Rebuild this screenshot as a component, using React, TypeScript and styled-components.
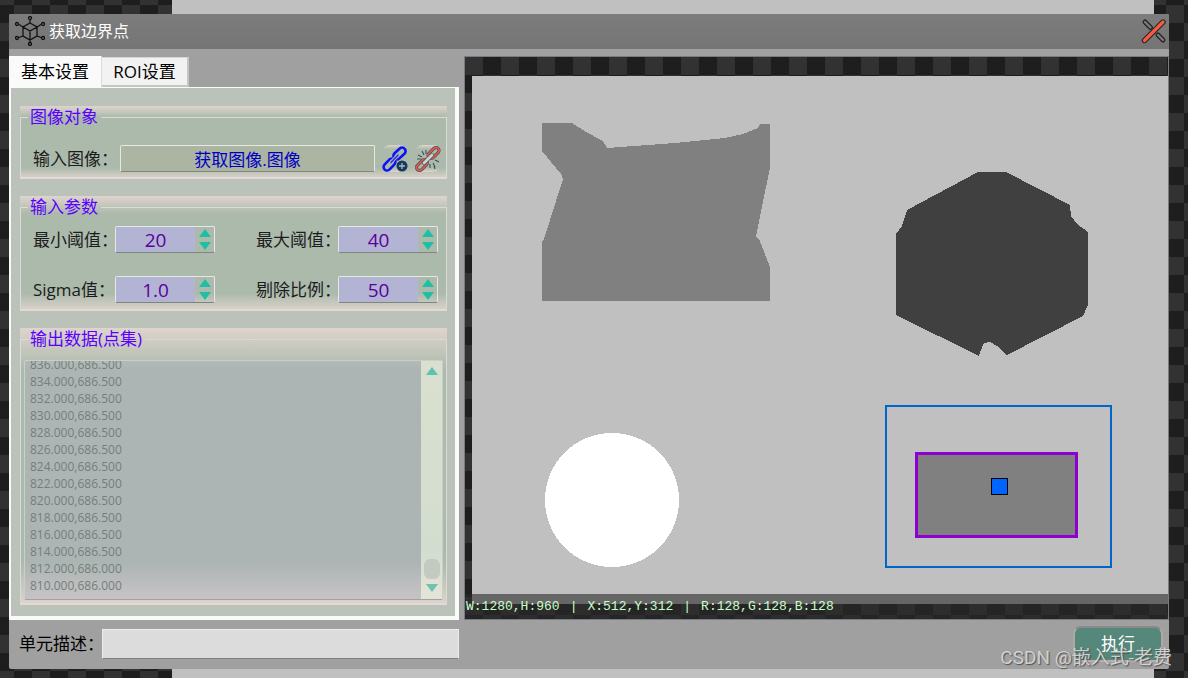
import React, { useLayoutEffect, useRef, useState } from 'react';
import styled, { createGlobalStyle, css } from 'styled-components';

const uiFont = '"Open Sans", "Noto Sans CJK SC", sans-serif';
const fade = 'linear-gradient(#dfd4ce 0%, #acbaac 15%, #acbaac 85%, #dfd4ce 100%)';

const GlobalStyle = createGlobalStyle`
  *, *::before, *::after { box-sizing: border-box; }
  body { margin: 0; font-family: ${uiFont}; font-size: 17px; line-height: 22px; color: #1c1c1c; }
  button, input, textarea { font: inherit; margin: 0; padding: 0; }
`;

const checker = 'repeating-conic-gradient(#1e1e1e 0 25%, #323232 0 50%)';

const Desktop = styled.div`
  min-height: 100vh;
  padding: 14px 19px 9px 9px;
  display: flex;
  background:
    linear-gradient(#c0c0c0, #c0c0c0) 172px 0 / calc(100% - 206px) 100% no-repeat,
    ${checker} 14px 5px / 36px 36px;
`;

const Window = styled.section`
  position: relative;
  flex: 1;
  min-width: 0;
  display: flex;
  flex-direction: column;
  background: #a0a0a0;
  border-radius: 2px;
`;

const TitleBar = styled.header`
  height: 35px;
  padding: 0 2px 2px 6px;
  display: flex;
  align-items: center;
  gap: 4px;
  background: linear-gradient(#7c7c7c, #757575);
  border-radius: 2px 2px 0 0;
`;

const Title = styled.h1`
  flex: 1;
  margin: 0;
  font-size: 16px;
  font-weight: 400;
  color: #fff;
`;

const PlainButton = styled.button`
  border: 0;
  background: none;
  display: flex;
  align-items: center;
  justify-content: center;
`;

const Main = styled.main`
  flex: 1;
  padding-top: 7px;
  display: flex;
  gap: 5px;
`;

const Settings = styled.div`
  flex: 0 0 450px;
  display: flex;
  flex-direction: column;
`;

const TabList = styled.div`
  height: 31px;
  display: flex;
  align-items: flex-end;
`;

const Tab = styled.button<{ $active: boolean }>`
  color: #000;
  ${({ $active }) =>
    $active
      ? css`
          width: 93px;
          height: 31px;
          border: 0;
          border-right: 1px solid #dcdcdc;
          background: #fafafa;
        `
      : css`
          width: 87px;
          height: 30px;
          border: 1px solid #fff;
          border-width: 1px 2px 2px 0;
          border-color: #d4d8d4 #c0c8c0 #c0c8c0;
          background: #f2f2f2;
        `}
`;

const Pane = styled.div`
  flex: 1;
  padding: 18px 8px 11px 9px;
  display: flex;
  flex-direction: column;
  gap: 17px;
  border: solid #fafafa;
  border-width: 1px 4px 4px 2px;
  background: #bac2ba;
`;

const Group = styled.div<{ $grow?: boolean }>`
  flex: ${({ $grow }) => ($grow ? 1 : 'none')};
  display: flex;
  background: ${fade};
`;

const GroupFields = styled.fieldset<{ $pad: string }>`
  flex: 1;
  min-width: 0;
  margin: 0;
  padding: ${({ $pad }) => $pad};
  border: 1px solid #d9dcd5;
  border-bottom: 2px solid #e2dad4;
  display: flex;
  flex-direction: column;
  gap: 23px;
`;

const GroupTitle = styled.legend<{ $list?: boolean }>`
  margin-left: ${({ $list }) => ($list ? '4px' : '-5px')};
  padding: 0 3px 0 2px;
  color: #5a00ff;
`;

const Row = styled.div`
  display: flex;
  align-items: center;
`;

const Label = styled.label<{ $width: number }>`
  flex: none;
  width: ${({ $width }) => $width}px;
  white-space: nowrap;
`;

const bevel = css`
  border: 1px solid #e6e8e4;
  border-bottom-color: #808580;
  border-radius: 2px;
`;

const SourceInput = styled.input`
  flex: 1;
  min-width: 0;
  height: 27px;
  ${bevel}
  background: #abb5a1;
  color: #0000c4;
  text-align: center;
`;

const LinkButton = styled(PlainButton)`
  flex: none;
  width: 26px;
  height: 27px;
  margin-left: 7px;
  border-radius: 8px;
  background: ${fade};
`;

const SpinFrame = styled.div`
  flex: none;
  width: 100px;
  height: 27px;
  display: flex;
  ${bevel}
`;

const SpinInput = styled.input`
  flex: 1;
  min-width: 0;
  border: 0;
  background: #b3b3d4;
  color: #5a009c;
  font-size: 19px;
  text-align: center;
  appearance: textfield;
  &::-webkit-inner-spin-button { appearance: none; margin: 0; }
`;

const SpinButtons = styled.div`
  width: 19px;
  padding: 2px 0;
  display: flex;
  flex-direction: column;
  justify-content: space-between;
`;

const Gap = styled.div`
  flex: 0 0 41px;
`;

const Output = styled.div`
  flex: 1;
  min-height: 0;
  display: flex;
  border: 1px solid #c9cfc9;
  border-bottom-color: #a2a2a0;
  border-radius: 2px;
  background: rgba(174, 176, 192, 0.4);
`;

const OutputText = styled.textarea`
  flex: 1;
  min-width: 0;
  height: 100%;
  min-height: 238px;
  padding: 5px;
  border: 0;
  resize: none;
  background: none;
  color: #747f79;
  font-size: 12px;
  line-height: 17px;
  scrollbar-width: none;
`;

const ScrollTrack = styled.div`
  width: 21px;
  padding: 6px 0 7px;
  display: flex;
  flex-direction: column;
  align-items: center;
  background: linear-gradient(#d9e0cf 0%, #d3ddcf 80%, #e6e4d8 100%);
`;

const ScrollThumb = styled.div`
  width: 16px;
  height: 20px;
  margin: auto 0 5px;
  border-radius: 6px;
  background: #c3cac2;
`;

const Viewer = styled.div`
  position: relative;
  flex: 1;
  min-width: 0;
  padding: 19px 0 15px 7px;
  display: flex;
  border: 1px solid #777b86;
  background: ${checker} 0 0 / 36px 36px;
`;

const Picture = styled.svg`
  flex: 1;
  min-width: 0;
  display: block;
  background: #c0c0c0;
`;

const Status = styled.div`
  position: absolute;
  left: 0;
  right: 0;
  bottom: 0;
  height: 25px;
  padding: 1px 0 0 1px;
  display: flex;
  align-items: center;
  gap: 10px;
  background: rgba(42, 42, 42, 0.6);
  color: #c8ffc8;
  font: 13px/24px "Liberation Mono", monospace;
`;

const Footer = styled.footer`
  height: 49px;
  padding: 0 6px 1px 10px;
  display: flex;
  align-items: center;
  color: #000;
`;

const DescriptionInput = styled.input`
  width: 357px;
  height: 30px;
  padding: 0 6px;
  border: 1px solid #ececec;
  border-bottom-color: #808080;
  background: #dcdcdc;
`;

const RunButton = styled.button`
  width: 90px;
  height: 36px;
  margin-left: auto;
  border: 2px solid #aea8a4;
  border-color: #8a8a88 #aea8a4 #b8b0ac;
  border-radius: 8px;
  background: #56877b;
  color: #fff;
`;

const Watermark = styled.div`
  position: absolute;
  right: -3px;
  bottom: -1px;
  font: 19px/24px Roboto, "Noto Sans CJK SC", sans-serif;
  color: rgba(225, 225, 225, 0.85);
  text-shadow: 1px 1px 1px rgba(60, 60, 60, 0.8);
  white-space: nowrap;
  pointer-events: none;
`;

function Triangle({ down, color = '#1fbfa6' }: { down?: boolean; color?: string }) {
  return (
    <svg width="12" height="8" viewBox="0 0 12 8" aria-hidden="true">
      <path d={down ? 'M0 0h12L6 8z' : 'M0 8h12L6 0z'} fill={color} />
    </svg>
  );
}

function NetworkIcon() {
  const nodes = [[15, 2], [2, 8], [28, 8], [2, 22], [28, 22], [15, 28]];
  return (
    <svg width="30" height="30" viewBox="0 0 30 30" fill="none" stroke="#111" strokeWidth="1.3" aria-hidden="true">
      <path d="M15 7 22 11V20L15 24 8 20V11zM8 11l7 4 7-4M15 15v9M15 4v3M4 8.5 8 11M26 8.5 22 11M4 21.500 8 20M26 21.500 22 20M15 24v2" />
      {nodes.map(([x, y]) => (
        <circle key={`${x}-${y}`} cx={x} cy={y} r="1.500" />
      ))}
    </svg>
  );
}

function CloseIcon() {
  return (
    <svg width="26" height="26" viewBox="0 0 26 26" fill="none" strokeLinecap="round" aria-hidden="true">
      <path d="M4 4l5.500 5.500M17 17l5 5" stroke="#262626" strokeWidth="5" />
      <path d="M4 4l5.500 5.500M17 17l5 5" stroke="#7a7a7a" strokeWidth="2.400" />
      <path d="M3.500 22.500 22 4" stroke="#262626" strokeWidth="5.400" />
      <path d="M3.500 22.500 22 4" stroke="#fb5a42" strokeWidth="3.200" />
    </svg>
  );
}

function LinkIcon() {
  return (
    <svg width="26" height="26" viewBox="0 0 26 26" fill="none" aria-hidden="true">
      <g stroke="#0a14f5" strokeWidth="2.600">
        <rect x="-7" y="-3.500" width="14" height="7" rx="3.500" transform="translate(17.500 7.500) rotate(-42)" />
        <rect x="-7" y="-3.500" width="14" height="7" rx="3.500" transform="translate(7.500 18.500) rotate(-47)" />
      </g>
      <path d="M9 16.500 16 9" stroke="#acbaac" strokeWidth="3.400" strokeLinecap="round" />
      <path d="M9 16.500 16 9" stroke="#2a36e8" strokeWidth="1.600" strokeLinecap="round" />
      <circle cx="20" cy="20" r="5.500" fill="#16395c" />
      <path d="M20 17v6M17 20h6" stroke="#a9bcc0" strokeWidth="1.300" />
    </svg>
  );
}

function UnlinkIcon() {
  const links = (
    <>
      <rect x="-6.500" y="-3" width="13" height="6" rx="3" transform="translate(18.500 7) rotate(-45)" />
      <rect x="-6.500" y="-3" width="13" height="6" rx="3" transform="translate(7 19) rotate(-45)" />
    </>
  );
  return (
    <svg width="26" height="26" viewBox="0 0 26 26" fill="none" aria-hidden="true">
      <g stroke="#4a4f55" strokeWidth="3.200">{links}</g>
      <g stroke="#e0574f" strokeWidth="1.800">{links}</g>
      <path d="M9 17l8-8" stroke="#4a5a60" strokeWidth="4" strokeLinecap="round" />
      <path d="M9 17l8-8" stroke="#ccd4d6" strokeWidth="2.600" strokeLinecap="round" />
      <path d="M7 5l2 4M11 4v4M3 9l4 2M2 13h4M15 18v4M18 17l2 4M20 14l4 2M19 20l1 3" stroke="#33505a" strokeWidth="1.100" />
    </svg>
  );
}

function Spin({ id, label, value, step }: { id: string; label: string; value: string; step: number }) {
  const [current, setCurrent] = useState(value);
  const digits = step < 1 ? 1 : 0;
  const change = (sign: number) => setCurrent((Number(current) + sign * step).toFixed(digits));
  return (
    <>
      <Label htmlFor={id} $width={82}>{label}</Label>
      <SpinFrame>
        <SpinInput id={id} type="number" step={step} value={current} onChange={(e) => setCurrent(e.target.value)} />
        <SpinButtons>
          <PlainButton type="button" aria-label="增加" onClick={() => change(1)}><Triangle /></PlainButton>
          <PlainButton type="button" aria-label="减少" onClick={() => change(-1)}><Triangle down /></PlainButton>
        </SpinButtons>
      </SpinFrame>
    </>
  );
}

const points = [
  ...Array.from({ length: 12 }, (_, i) => `${836 - i * 2}.000,686.500`),
  '812.000,686.000',
  '810.000,686.000',
].join('\n');

function OutputBox() {
  const ref = useRef<HTMLTextAreaElement>(null);
  const scrollBy = (lines: number) => ref.current?.scrollBy(0, lines * 17);
  useLayoutEffect(() => {
    if (ref.current) ref.current.scrollTop = ref.current.scrollHeight;
  }, []);
  return (
    <Output>
      <OutputText ref={ref} readOnly aria-label="输出数据" value={points} />
      <ScrollTrack>
        <PlainButton type="button" aria-label="向上滚动" onClick={() => scrollBy(-1)}><Triangle color="#5fc2ae" /></PlainButton>
        <ScrollThumb />
        <PlainButton type="button" aria-label="向下滚动" onClick={() => scrollBy(1)}><Triangle down color="#6cc3b1" /></PlainButton>
      </ScrollTrack>
    </Output>
  );
}

function CameraImage() {
  return (
    <Picture viewBox="0 0 696 528" preserveAspectRatio="xMidYMid meet" shapeRendering="crispEdges" role="img" aria-label="图像">
      <path
        fill="#808080"
        d="M70 47h30l14 9 17 9 4 7 68-5 50-5 18-4 15-6 2-4h10v44l-8 38-6 31 3 2 11 28v34H70v-59l2-3 19-60-2-5-19-23z"
      />
      <path
        fill="#404040"
        d="M506 96h28l64 33 1 11 6 8 11 8v73l-5 11-76 39-10-9-7-4-6 1-3 7-2 6-83-41v-81l6-8 5-16z"
      />
      <circle cx="140" cy="424" r="67" fill="#fff" />
      <rect x="414" y="330" width="225" height="161" fill="none" stroke="#0066cc" strokeWidth="2" />
      <rect x="444.500" y="377.500" width="160" height="83" fill="#808080" stroke="#8c00d2" strokeWidth="3" />
      <rect x="519.500" y="402.500" width="16" height="16" fill="#0064ff" stroke="#000" />
    </Picture>
  );
}

export default function App() {
  const [tab, setTab] = useState(0);
  return (
    <>
      <GlobalStyle />
      <Desktop>
        <Window>
          <TitleBar>
            <NetworkIcon />
            <Title>获取边界点</Title>
            <PlainButton type="button" aria-label="关闭"><CloseIcon /></PlainButton>
          </TitleBar>
          <Main>
            <Settings>
              <TabList role="tablist">
                {['基本设置', 'ROI设置'].map((name, i) => (
                  <Tab key={name} type="button" role="tab" aria-selected={tab === i} $active={tab === i} onClick={() => setTab(i)}>
                    {name}
                  </Tab>
                ))}
              </TabList>
              <Pane>
                <Group>
                  <GroupFields $pad="17px 5px 5px 12px">
                    <GroupTitle>图像对象</GroupTitle>
                    <Row>
                      <Label htmlFor="source" $width={87}>输入图像：</Label>
                      <SourceInput id="source" readOnly value="获取图像.图像" />
                      <LinkButton type="button" aria-label="链接图像"><LinkIcon /></LinkButton>
                      <LinkButton type="button" aria-label="取消链接"><UnlinkIcon /></LinkButton>
                    </Row>
                  </GroupFields>
                </Group>
                <Group>
                  <GroupFields $pad="8px 8px 6px 12px">
                    <GroupTitle>输入参数</GroupTitle>
                    <Row>
                      <Spin id="min" label="最小阈值：" value="20" step={1} />
                      <Gap />
                      <Spin id="max" label="最大阈值：" value="40" step={1} />
                    </Row>
                    <Row>
                      <Spin id="sigma" label="Sigma值：" value="1.0" step={0.1} />
                      <Gap />
                      <Spin id="ratio" label="剔除比例：" value="50" step={1} />
                    </Row>
                  </GroupFields>
                </Group>
                <Group $grow>
                  <GroupFields $pad="10px 3px 3px 3px">
                    <GroupTitle $list>输出数据(点集)</GroupTitle>
                    <OutputBox />
                  </GroupFields>
                </Group>
              </Pane>
            </Settings>
            <Viewer>
              <CameraImage />
              <Status>
                <span>W:1280,H:960</span>
                <span>|</span>
                <span>X:512,Y:312</span>
                <span>|</span>
                <span>R:128,G:128,B:128</span>
              </Status>
            </Viewer>
          </Main>
          <Footer>
            <Label htmlFor="description" $width={83}>单元描述：</Label>
            <DescriptionInput id="description" />
            <RunButton type="button">执行</RunButton>
          </Footer>
          <Watermark>CSDN @嵌入式-老费</Watermark>
        </Window>
      </Desktop>
    </>
  );
}
